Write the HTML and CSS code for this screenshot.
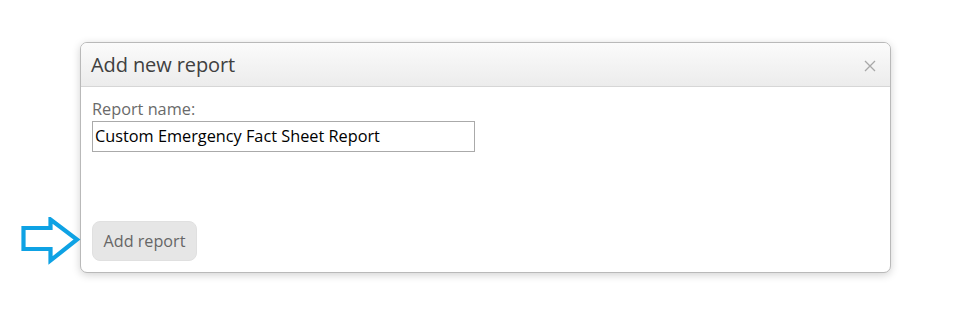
FILE: index.html
```html
<!DOCTYPE html>
<html>
<head>
<meta charset="utf-8">
<link rel="stylesheet" href="styles.css">
</head>
<body>
<div class="page">
  <div class="dialog">
    <div class="header">
      <span class="title">Add new report</span>
      <svg class="close" width="12" height="12" viewBox="0 0 12 12">
        <path d="M1 1 L11 11 M11 1 L1 11" stroke="#a8a8a8" stroke-width="1.3" fill="none"/>
      </svg>
    </div>
    <div class="content">
      <label class="label">Report name:</label>
      <div class="input">Custom Emergency Fact Sheet Report</div>
      <div class="spacer"></div>
      <button class="btn">Add report</button>
    </div>
  </div>
  <svg class="arrow" width="62" height="48" viewBox="0 0 62 48">
    <path d="M2.5 11 H29.5 V2.5 L56 22.5 L29.5 43.5 V32 H2.5 Z" fill="none" stroke="#0ea2e4" stroke-width="4.2" stroke-linejoin="miter"/>
  </svg>
</div>
</body>
</html>
```
FILE: styles.css
```css
html, body { margin: 0; padding: 0; background: #fff; }
body { font-family: "Open Sans", "Noto Sans", sans-serif; }
.page { position: relative; width: 962px; height: 327px; padding-top: 42px; box-sizing: border-box; }
.dialog {
  margin-left: 80px;
  width: 811px;
  height: 231px;
  box-sizing: border-box;
  border: 1px solid #b9b9b9;
  border-radius: 7px;
  box-shadow: 0 2px 8px rgba(0,0,0,0.18);
  overflow: hidden;
  display: flex;
  flex-direction: column;
  background: #fff;
}
.header {
  height: 44px;
  box-sizing: border-box;
  background: linear-gradient(#fbfbfb, #ececec);
  border-bottom: 1px solid #d6d6d6;
  display: flex;
  align-items: center;
  justify-content: space-between;
  padding: 0 14px 0 10px;
}
.title { font-size: 20px; color: #404040; letter-spacing: -0.1px; }
.close { display: block; margin-top: 2px; }
.content {
  flex: 1;
  display: flex;
  flex-direction: column;
  align-items: flex-start;
  padding: 11px 11px 11px 11px;
}
.label { font-size: 16.3px; color: #6a6a6a; line-height: 22px; margin-bottom: 1px; }
.input {
  width: 383px;
  height: 31px;
  box-sizing: border-box;
  border: 1px solid #aaaaaa;
  font-size: 16.3px;
  color: #000;
  line-height: 28px;
  padding-left: 2px;
}
.spacer { flex: 1; }
.btn {
  font-family: inherit;
  font-size: 16.2px;
  color: #666;
  background: #e6e6e6;
  border: 1px solid #e0e0e0;
  border-radius: 8px;
  width: 105px;
  height: 40px;
  padding: 0;
}
.arrow { position: absolute; left: 21px; top: 217px; }
```
